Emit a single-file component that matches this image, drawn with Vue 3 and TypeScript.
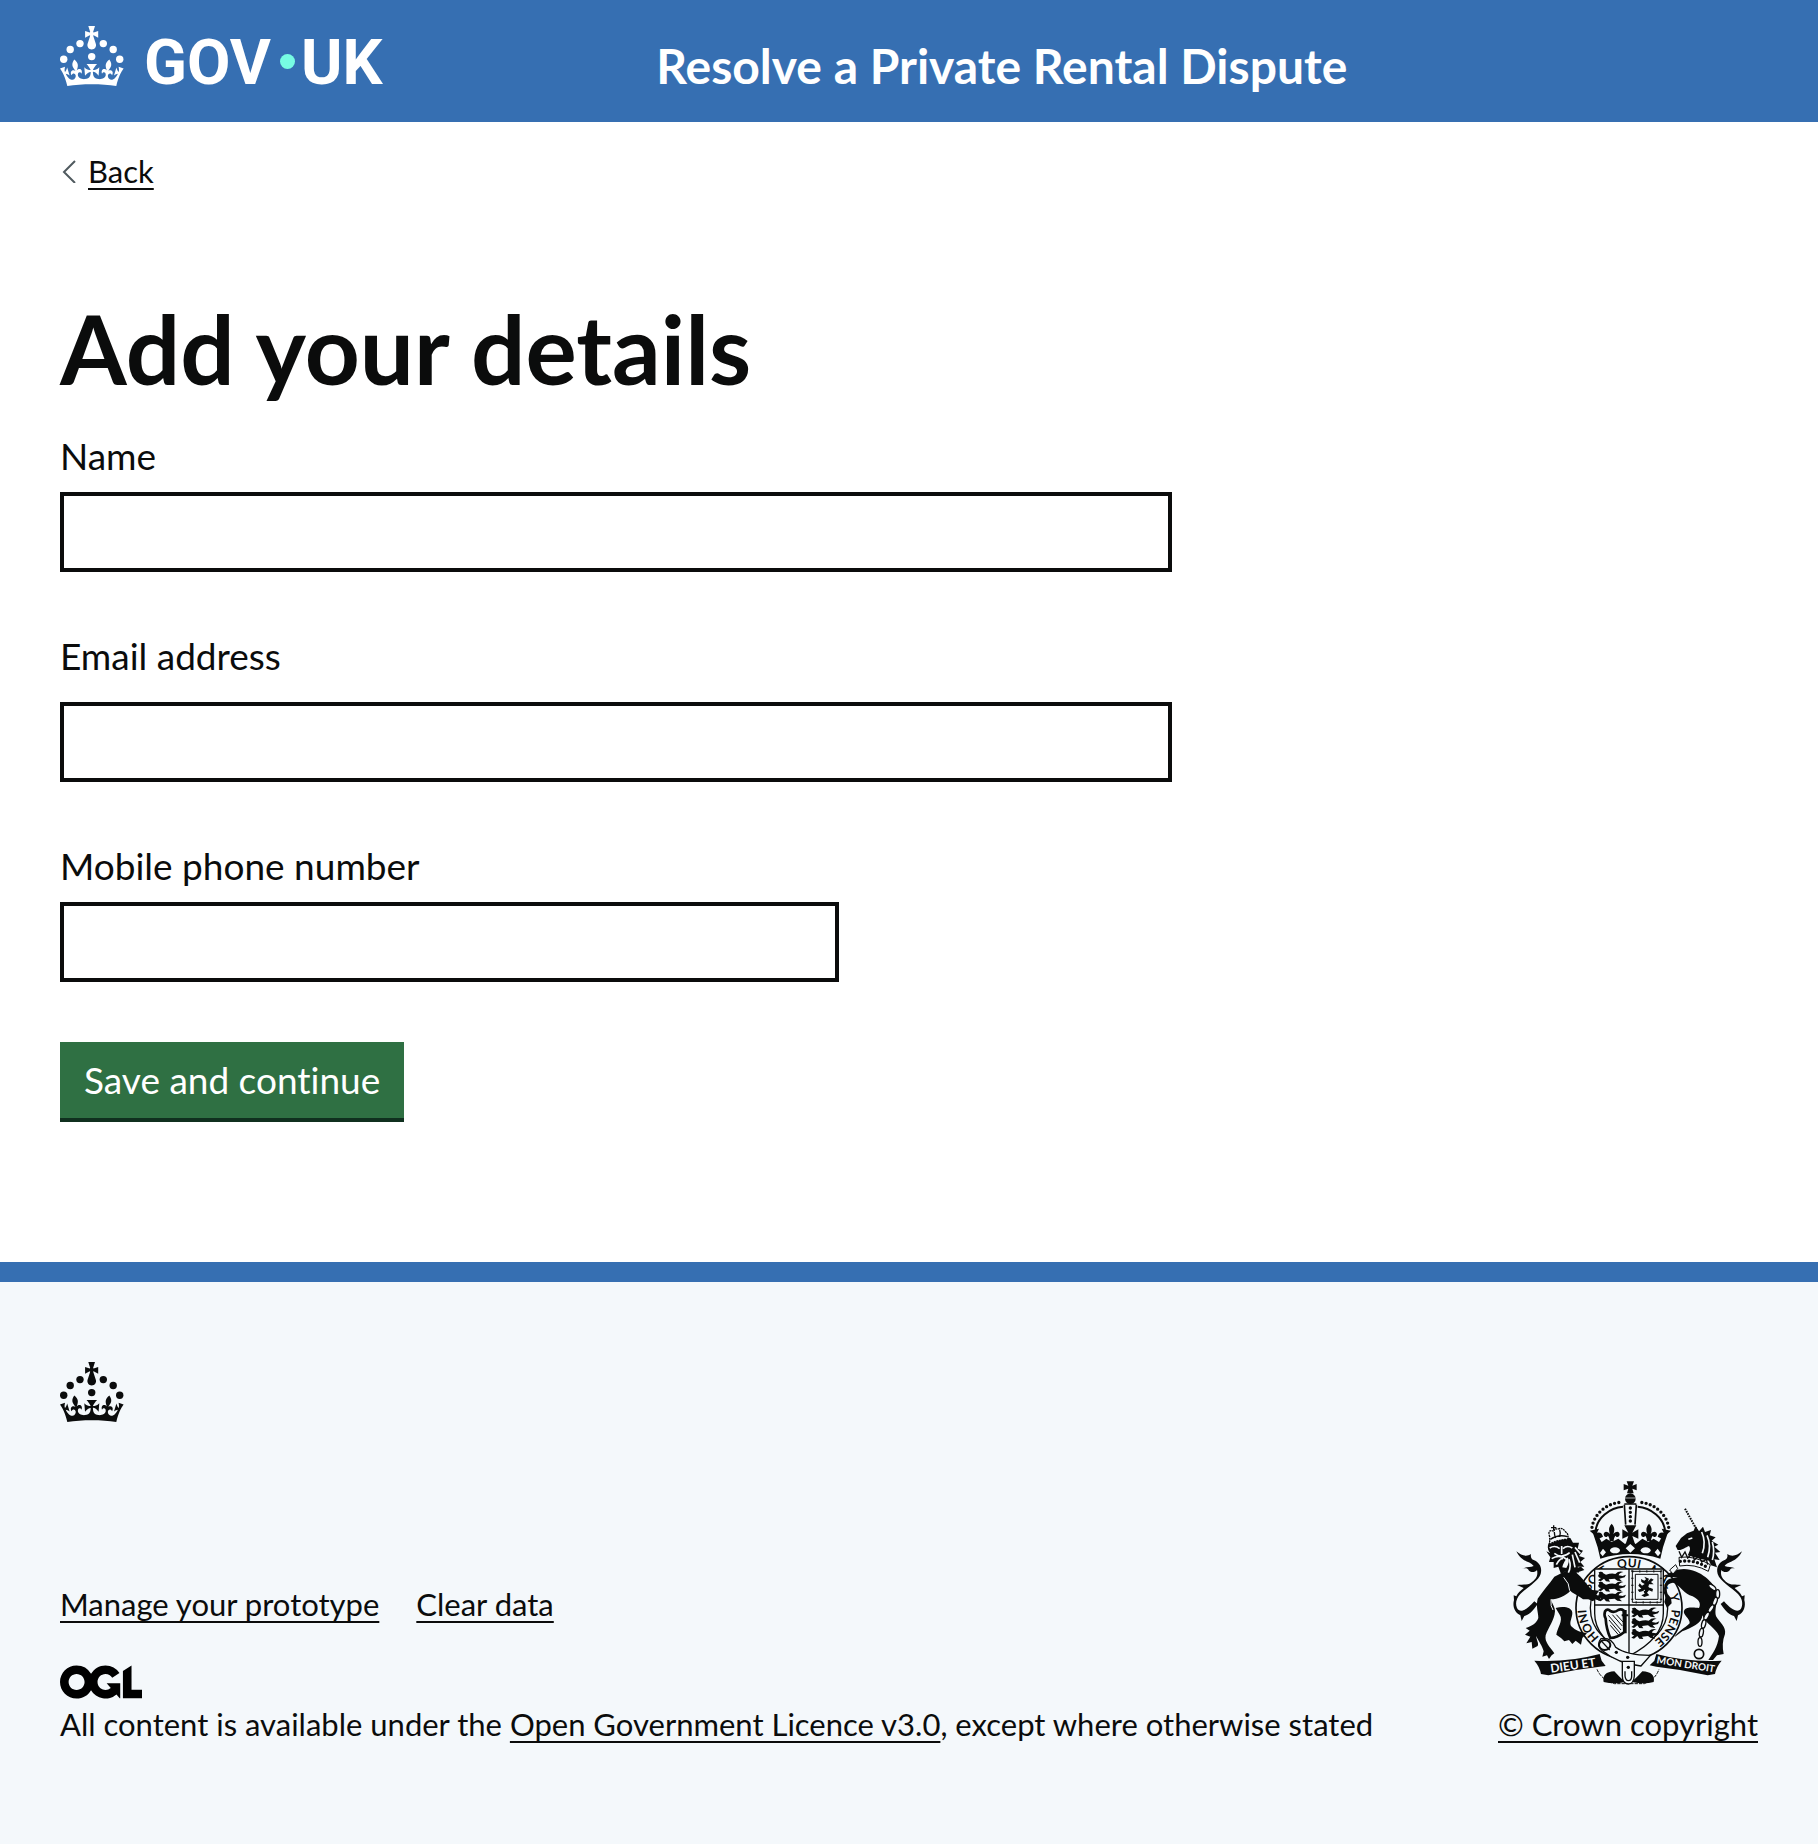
<script setup lang="ts">
import { ref } from 'vue'

interface Field {
  id: string
  label: string
  type: string
  autocomplete: string
  modifier?: string
}

const fields: Field[] = [
  { id: 'name', label: 'Name', type: 'text', autocomplete: 'name' },
  { id: 'email', label: 'Email address', type: 'email', autocomplete: 'email', modifier: 'field--spaced' },
  { id: 'phone', label: 'Mobile phone number', type: 'tel', autocomplete: 'tel', modifier: 'field--short' }
]

const values = ref<Record<string, string>>({ name: '', email: '', phone: '' })

const crownDots: [number, number][] = [
  [20, 17.6], [10.2, 23.5], [3.7, 33.2], [31.7, 30.6], [43.3, 17.6], [53.2, 23.5], [59.7, 33.2]
]
const crownPath =
  'M33.1 9.8c.2-.1.3-.3.5-.5l4.6 2.4v-6.8l-4.6 1.5c-.1-.2-.3-.3-.5-.5l1.9-5.9h-6.7l1.9 5.9c-.2.1-.3.3-.5.5l-4.6-1.5v6.8l4.6-2.4c.1.2.3.3.5.5l-2.6 8c-.9 2.8 1.2 5.7 4.1 5.7h0c3 0 5.1-2.9 4.1-5.7l-2.6-8ZM37 37.9s-3.4 3.8-4.1 6.1c2.2 0 4.2-.5 6.4-2.8l-.7 8.5c-2-2.8-4.4-4.1-5.7-3.8.1 3.1.5 6.7 5.8 7.2 3.7.3 6.7-1.5 7-3.8.4-2.6-2-4.3-3.7-1.6-1.4-4.5 2.4-6.1 4.9-3.2-1.9-4.5-1.8-7.7 2.4-10.9 3 4 2.6 7.3-1.2 11.1 2.4-1.3 6.2 0 4 4.6-1.2-2.8-3.7-2.2-4.2.2-.3 1.7.7 3.7 3 4.2 1.9.3 4.7-.9 7-5.9-1.3 0-2.4.7-3.9 1.7l2.4-8c.6 2.3 1.4 3.7 2.2 4.5.6-1.6.5-2.8 0-5.3l5 1.8c-2.6 3.6-5.2 8.7-7.3 17.5-7.4-1.1-15.7-1.7-24.5-1.7h0c-8.8 0-17.1.6-24.5 1.7-2.1-8.9-4.7-13.9-7.3-17.5l5-1.8c-.5 2.5-.6 3.7 0 5.3.8-.8 1.6-2.3 2.2-4.5l2.4 8c-1.5-1-2.6-1.7-3.9-1.7 2.3 5 5.2 6.2 7 5.9 2.3-.4 3.3-2.4 3-4.2-.5-2.4-3-3.1-4.2-.2-2.2-4.6 1.6-6 4-4.6-3.7-3.7-4.2-7.1-1.2-11.1 4.2 3.2 4.3 6.4 2.4 10.9 2.5-2.8 6.3-1.3 4.9 3.2-1.8-2.7-4.1-1-3.7 1.6.3 2.3 3.3 4.1 7 3.8 5.4-.5 5.7-4.2 5.8-7.2-1.3-.2-3.7 1-5.7 3.8l-.7-8.5c2.2 2.3 4.2 2.7 6.4 2.8-.7-2.3-4.1-6.1-4.1-6.1h10.6Z'

const lionRows: [number, number][] = [
  [292, 306], [292, 336], [292, 366], [392, 414], [392, 446], [392, 478]
]

const motto: [string, number][] = [
  ['HONI', 6], ['SOIT', 156], ['QUI', 268], ['MAL', 362], ['Y', 458], ['PENSE', 502]
]
</script>

<template>
  <div class="page">
    <header class="header">
      <a class="logo" href="#" aria-label="GOV.UK">
        <svg class="crown" viewBox="0 0 64 60" aria-hidden="true">
          <circle v-for="([x, y], i) in crownDots" :key="i" :cx="x" :cy="y" r="3.7" />
          <path :d="crownPath" />
        </svg>
        <span class="wordmark">GOV<i class="wordmark-dot"></i>UK</span>
      </a>
      <span class="service">Resolve a Private Rental Dispute</span>
    </header>

    <main class="main">
      <a class="back" href="#">
        <svg class="chevron" viewBox="0 0 14 24" aria-hidden="true">
          <path d="M13 2 L2 13 L13 24" fill="none" stroke="#505a5f" stroke-width="2" />
        </svg>
        <span class="underlined">Back</span>
      </a>

      <h1>Add your details</h1>

      <form @submit.prevent>
        <div v-for="f in fields" :key="f.id" class="field" :class="f.modifier">
          <label :for="f.id">{{ f.label }}</label>
          <input :id="f.id" v-model="values[f.id]" :name="f.id" :type="f.type" :autocomplete="f.autocomplete" />
        </div>
        <button type="submit">Save and continue</button>
      </form>
    </main>

    <footer class="footer">
      <svg class="crown" viewBox="0 0 64 60" aria-hidden="true">
        <circle v-for="([x, y], i) in crownDots" :key="i" :cx="x" :cy="y" r="3.7" />
        <path :d="crownPath" />
      </svg>
      <div class="footer-row">
        <div class="footer-meta">
          <nav class="footer-links" aria-label="Support links">
            <a class="underlined" href="#">Manage your prototype</a>
            <a class="underlined" href="#">Clear data</a>
          </nav>
          <svg class="ogl" viewBox="0 0 483.2 195.7" aria-hidden="true">
            <path d="M421.5 142.8V.1l-50.7 32.3v161.1h112.4v-50.7zm-122.3-9.6A47.12 47.12 0 0 1 221 97.8c0-26 21.1-47.1 47.1-47.1 16.7 0 31.4 8.7 39.7 21.8l42.7-27.2A97.63 97.63 0 0 0 268.1 0c-36.5 0-68.3 20.1-85.1 49.7A98 98 0 0 0 97.8 0C43.9 0 0 43.9 0 97.8s43.9 97.8 97.8 97.8c36.5 0 68.3-20.1 85.1-49.7a97.76 97.76 0 0 0 149.6 25.4l19.4 22.2h3v-87.8h-80l24.3 27.5zM97.8 145c-26 0-47.1-21.1-47.1-47.1s21.1-47.1 47.1-47.1 47.1 21.1 47.1 47.1S123.8 145 97.8 145" />
          </svg>
          <p class="licence">All content is available under the <a class="underlined" href="#">Open Government Licence v3.0</a>, except where otherwise stated</p>
        </div>

        <a class="copyright" href="#">
          <svg class="crest" viewBox="6 33 750 612" aria-hidden="true">
            <defs>
              <path id="garter-arc" d="M300 506 A128 122 0 1 1 400 535" />
              <g id="passant">
                <path d="M0 2 q10 -6 15 2 l8 4 q18 -6 28 -2 q10 -10 24 -6 q-12 2 -14 10 l12 2 l10 -4 l-4 8 l-16 4 l8 8 l-14 -2 l-8 -6 l-18 2 l4 7 l-12 -1 l-6 -8 l-10 8 l-8 -3 l9 -7 q-10 -2 -8 -10 q2 -2 10 -2 z" />
                <circle cx="8" cy="5" r="6" />
              </g>
              <g id="fleur">
                <path d="M0 -23 C10 -12 9 -2 5 8 C14 -2 23 0 24 9 C24 17 15 20 11 13 C8 18 6 22 6 30 H-6 C-6 22 -8 18 -11 13 C-15 20 -24 17 -24 9 C-23 0 -14 -2 -5 8 C-9 -2 -10 -12 0 -23Z" />
              </g>
              <path id="tail" d="M46 244 C60 256 76 262 90 252 C88 262 92 268 98 270 C116 278 124 292 119 312 C112 334 78 352 58 372 C46 385 42 400 48 414 C56 430 76 422 100 394 L110 402 C96 424 82 436 70 438 L62 453 L58 436 C40 428 34 408 39 390 L38 376 L46 379 C52 366 60 362 68 354 L48 345 C66 342 80 346 90 338 C104 328 112 318 108 300 C102 308 90 308 84 302 C80 294 74 294 64 296 C78 290 88 292 98 288 C86 272 62 278 46 244Z" />
            </defs>

            <!-- imperial crown -->
            <path d="M367 33 m10 1 h22 l-5 13 13 -5 v19 l-13 -5 4 14 h-20 l4 -14 -14 5 v-19 l14 5z" />
            <circle cx="388" cy="86" r="16" />
            <path d="M372 84 h32" class="cut" stroke-width="2" />
            <path d="M273 172 C280 130 318 100 358 97" class="beads" />
            <path d="M503 172 C496 130 458 100 418 97" class="beads" />
            <path d="M284 184 C286 146 326 112 366 110 M492 184 C490 146 450 112 410 110" class="line" stroke-width="6" />
            <path d="M370 104 L374 164 M406 104 L402 164 M370 102 H406" class="line" stroke-width="5" />
            <path d="M388 114 V160" class="beads" />
            <path d="M274 184 L290 232 Q294 250 298 266 Q342 252 388 252 Q434 252 478 266 Q482 250 486 232 L502 184 L486 196 L474 216 L458 206 L442 216 L424 206 L404 222 L388 214 L372 222 L352 206 L332 216 L316 206 L302 216 L290 196Z" />
            <path d="M266 182 L294 176 L288 188 Q302 184 306 200 L294 206 L284 198Z M510 182 L482 176 L488 188 Q474 184 470 200 L482 206 L492 198Z" />
            <use href="#fleur" x="332" y="184" />
            <use href="#fleur" x="444" y="184" />
            <path d="M370 166 h36 l-12 22 18 -10 v28 l-18 -8 8 24 h-28 l8 -24 -18 8 v-28 l18 10z" />
            <g class="paper">
              <ellipse cx="342" cy="241" rx="15" ry="9" />
              <ellipse cx="434" cy="241" rx="15" ry="9" />
              <path d="M388 222 l14 13 -14 13 -14 -13z M306 236 l9 11 -10 12 -8 -10z M470 236 l-9 11 10 12 8 -10z" />
            </g>

            <!-- tails -->
            <use href="#tail" />
            <use href="#tail" transform="matrix(-1 0 0 1 769 0)" />

            <!-- garter -->
            <ellipse cx="384" cy="414" rx="159" ry="154" class="plate" stroke-width="5" />
            <ellipse cx="384" cy="414" rx="116" ry="116" class="line" stroke-width="4" />
            <g class="motto">
              <text v-for="[word, offset] in motto" :key="word">
                <textPath href="#garter-arc" :startOffset="offset">{{ word }}</textPath>
              </text>
            </g>

            <!-- shield -->
            <path d="M281 297 H487 V430 C487 490 440 530 384 558 C328 530 281 490 281 430Z" class="plate" stroke-width="4" />
            <path d="M384 297 V558 M281 405 H487" class="line" stroke-width="4" />
            <use v-for="([x, y], i) in lionRows" :key="i" href="#passant" :x="x" :y="y" />
            <path d="M394 304 H480 V397 H394Z M403 313 H471 V388 H403Z" class="line" stroke-width="3" />
            <path d="M394 304 H480 V397 H394Z" class="line" stroke-width="7" stroke-dasharray="3 18" />
            <path d="M430 320 l14 6 -4 9 10 -10 8 4 -8 7 8 7 -14 0 -2 8 14 6 -2 8 -10 -4 -6 7 7 8 -15 5 -9 -5 10 -5 -4 -8 -12 3 -5 -7 11 -3 -9 -9 4 -7 7 7 8 -5 -10 -6 -1 -9 10 5 5 -4z" />
            <path d="M418 336 l8 6 M444 352 l8 -6 M424 366 l8 -6" class="cut" stroke-width="3" />
            <path d="M312 424 q8 -10 16 -1 q12 6 24 -3 q8 -4 16 2 l2 64 q-22 18 -42 18 q-12 -26 -14 -58 q-6 -10 -2 -22z" class="line" stroke-width="8" />
            <path d="M322 436 L360 480 M324 450 L358 490 M328 466 L352 494 M334 434 L364 468 M346 434 L366 456" class="line" stroke-width="3" />
            <path d="M362 436 h20 M374 420 v70" class="line" stroke-width="6" />

            <!-- buckled strap -->
            <path d="M300 506 Q330 500 344 532 Q376 556 448 556 L420 588 Q350 580 304 542 Q284 524 300 506Z" class="plate" stroke-width="4" />
            <ellipse cx="311" cy="525" rx="17" ry="15" class="line" stroke-width="6" />
            <path d="M302 514 L326 540" class="line" stroke-width="4" />
            <circle cx="346" cy="547" r="5" /><circle cx="380" cy="562" r="5" />
            <path d="M288 598 Q302 630 340 641 H430 Q462 630 474 598" class="line" stroke-width="3" stroke-dasharray="10 3" />
            <path d="M308 636 Q302 606 340 604 Q352 618 372 636 Q340 644 308 636Z M458 636 Q464 606 424 604 Q412 618 392 636 Q430 644 458 636Z" />
            <path d="M364 574 H400 V618 Q398 642 382 642 Q364 642 364 618Z" class="plate" stroke-width="4" />
            <path d="M372 604 V618 Q374 632 382 632 Q392 632 392 618 V604" class="line" stroke-width="4" />
            <circle cx="382" cy="592" r="5" />

            <!-- lion -->
            <path d="M160 320 C146 340 126 362 110 386 C104 410 112 426 112 444 C106 460 94 468 74 474 L86 482 L72 494 L88 500 L76 520 L92 516 L94 536 L110 528 C114 518 106 512 106 498 C112 514 124 526 128 544 L124 560 L138 556 L144 567 L152 556 L160 550 C146 530 130 516 134 496 C142 472 160 452 162 424 C162 410 152 400 150 388 C170 388 194 378 208 362 C220 374 236 378 246 388 L262 388 L276 394 L282 388 L296 392 L298 380 L286 374 L294 362 L274 360 C258 346 244 322 226 308 L250 300 L240 290 L200 300Z" />
            <path d="M164 414 C188 408 212 412 214 428 C214 444 204 456 210 468 C224 482 238 486 258 490 L244 504 L240 524 L224 512 L214 522 L204 510 L190 514 L180 504 L166 494 C168 474 188 452 176 434Z" />
            <path d="M158 206 C138 214 136 236 148 250 L136 244 L148 262 L144 276 L158 276 L158 294 L172 290 L180 312 L194 304 L206 322 L216 302 L234 308 L230 290 L250 290 L238 276 L252 264 L234 258 L246 242 L230 236 L234 218 L216 218 L208 204 Q184 198 158 206Z" />
            <path d="M146 234 Q162 224 176 236 M186 236 Q198 224 214 234 M182 228 V252 M160 250 Q182 268 206 248 M152 266 Q176 250 200 270 M166 284 Q176 264 186 266 M204 268 Q212 290 202 308 M214 254 L222 292 M222 246 L236 278 M222 232 L238 250" class="cut" stroke-width="5" />
            <path d="M196 294 Q208 274 200 262 Q186 278 184 292Z" class="paper" />
            <path d="M146 200 Q138 176 160 184 Q158 174 170 178 Q184 170 194 186 Q204 192 200 208 Q174 208 146 222Z" class="plate" stroke-width="4" stroke-dasharray="6 2" />
            <path d="M148 208 Q172 192 200 200 M160 186 Q160 196 164 204 M158 166 v14 M150 173 h16 M176 180 Q180 190 176 200" class="line" stroke-width="4" />
            <path d="M188 322 Q206 340 206 362 M150 388 Q148 410 156 420" class="cut" stroke-width="3" />

            <!-- unicorn -->
            <path d="M552 116 L590 184" class="line" stroke-width="6" stroke-dasharray="5 3" />
            <path d="M524 228 L540 204 L558 190 L578 182 L584 168 L594 184 L606 170 L612 186 L630 180 L626 196 L644 202 L632 212 L652 224 L640 230 L658 246 L642 248 L656 270 L640 268 L648 292 L630 286 L624 272 L596 266 L560 256 C566 244 570 236 564 228 C552 232 544 242 530 240Z" />
            <path d="M562 208 l12 -4 M602 186 Q616 216 604 250 M618 196 Q632 226 620 262 M634 216 Q642 244 634 270" class="cut" stroke-width="5" />
            <path d="M534 262 Q580 256 628 284 L622 304 Q580 280 536 288Z" class="plate" stroke-width="3" />
            <path d="M538 274 Q582 268 622 294" class="beads" />
            <path d="M534 244 L542 262 L552 246 L560 264 L574 250 L580 270 L594 258 L602 276 L616 268 L620 284" class="line" stroke-width="4" />
            <path d="M518 304 C550 288 590 302 614 322 C630 336 648 352 648 384 C646 410 640 426 646 440 C656 456 676 470 672 492 C664 512 664 532 668 552 L648 556 L636 570 L622 570 C634 552 650 532 654 498 C644 474 612 460 604 436 C604 460 570 474 544 484 L520 502 C528 486 552 474 566 460 C568 444 542 434 550 420 C556 410 580 412 594 414 C602 400 592 384 566 376 C544 364 532 342 516 338 C498 340 494 352 500 372 L510 384 L512 400 L498 414 L490 396 L494 380 C484 356 490 332 506 326 L530 322 C512 322 500 318 494 326 C496 312 506 308 518 304Z" />
            <path d="M506 300 L524 284 L530 296 L516 312Z" class="plate" stroke-width="3" />
            <g class="plate" stroke-width="4">
              <ellipse cx="634" cy="352" rx="6" ry="13" transform="rotate(-50 634 352)" />
              <ellipse cx="650" cy="372" rx="6" ry="13" />
              <ellipse cx="642" cy="394" rx="6" ry="13" transform="rotate(20 642 394)" />
              <ellipse cx="630" cy="416" rx="6" ry="13" transform="rotate(32 630 416)" />
              <ellipse cx="617" cy="438" rx="6" ry="13" transform="rotate(28 617 438)" />
              <ellipse cx="608" cy="462" rx="6" ry="13" transform="rotate(14 608 462)" />
              <ellipse cx="601" cy="488" rx="6" ry="13" transform="rotate(10 601 488)" />
              <ellipse cx="597" cy="516" rx="6" ry="13" />
            </g>
            <circle cx="594" cy="552" r="14" class="line" stroke-width="5" />

            <!-- ribbons -->
            <path d="M100 572 Q200 578 296 552 L302 572 L314 588 L296 590 Q220 598 142 616 L120 612 Q116 590 100 572Z" />
            <path d="M662 572 Q562 578 466 552 L460 572 L446 586 L466 590 Q542 598 620 616 L642 612 Q646 590 662 572Z" />
            <g class="ribbon-text">
              <text transform="translate(150 608) rotate(-8)">DIEU ET</text>
              <text transform="translate(466 580) rotate(9)" class="ribbon-small">MON DROIT</text>
            </g>
          </svg>
          <span class="underlined">© Crown copyright</span>
        </a>
      </div>
    </footer>
  </div>
</template>

<style>
body {
  margin: 0;
  background: #f4f8fb;
}
</style>

<style scoped>
.page {
  color: #0b0c0c;
  background: #fff;
  font-family: Lato, "Liberation Sans", sans-serif;
  font-size: 31px;
  line-height: 40px;
  font-variant-ligatures: none;
}

a {
  color: inherit;
  text-decoration: none;
}

.underlined {
  text-decoration: underline;
  text-decoration-thickness: 2px;
  text-decoration-skip-ink: none;
  text-underline-offset: 5px;
}

.crown {
  display: block;
  flex: none;
  width: 64px;
  height: 60px;
  fill: currentColor;
}

.header {
  display: flex;
  align-items: flex-start;
  padding: 26px 60px;
  color: #fff;
  background: #366fb2;
}

.logo {
  display: flex;
  flex: none;
  width: 35%;
}

.wordmark {
  display: flex;
  padding-top: 7px;
  margin-left: 20px;
  font: 700 63px/60px Roboto, "Liberation Sans", sans-serif;
}

.wordmark-dot {
  width: 15px;
  height: 15px;
  margin: 21px 6px 0 9px;
  border-radius: 50%;
  background: #77fce3;
}

.service {
  padding: 10px 0 0 2px;
  font-size: 48px;
  font-weight: 700;
  line-height: 60px;
}

.main {
  padding: 29px 60px 140px;
}

.back {
  display: flex;
  align-items: center;
  gap: 12px;
  width: fit-content;
}

.chevron {
  width: 14px;
  height: 24px;
  margin-left: 2px;
}

h1 {
  margin: 105px 0 32px;
  font-size: 96px;
  font-weight: 700;
  line-height: 104px;
}

.field {
  display: flex;
  flex-direction: column;
  gap: 12px;
  width: calc((100% + 60px) * 2 / 3 - 60px);
  margin-bottom: 60px;
}

.field--spaced {
  gap: 22px;
}

label {
  font-size: 37px;
  line-height: 48px;
}

input {
  box-sizing: border-box;
  width: 100%;
  height: 80px;
  padding: 8px;
  border: 4px solid #0b0c0c;
  border-radius: 0;
  background: #fff;
  font: inherit;
  font-size: 37px;
}

.field--short input {
  max-width: 779px;
}

button {
  display: block;
  padding: 0 24px;
  border: 0;
  border-bottom: 4px solid #10301f;
  color: #fff;
  background: #2f7043;
  font: inherit;
  font-size: 37px;
  line-height: 76px;
  font-variant-ligatures: none;
}

.footer {
  padding: 80px 60px 100px;
  border-top: 20px solid #366fb2;
  background: #f4f8fb;
}

.footer-row {
  display: flex;
  align-items: flex-end;
  justify-content: space-between;
  gap: 60px;
  margin-top: 59px;
}

.footer-links {
  display: flex;
  gap: 37px;
}

.ogl {
  display: block;
  width: 82px;
  height: 34px;
  margin: 41px 0 5px;
}

.licence {
  margin: 0;
}

.copyright {
  display: flex;
  flex: none;
  flex-direction: column;
  align-items: center;
  gap: 19px;
}

.crest {
  display: block;
  width: 250px;
  height: 204px;
  fill: #0b0c0c;
}

.line {
  fill: none;
  stroke: #0b0c0c;
}

.cut {
  fill: none;
  stroke: #f4f8fb;
}

.beads {
  fill: none;
  stroke: #0b0c0c;
  stroke-width: 10px;
  stroke-linecap: round;
  stroke-dasharray: 0 13;
}

.plate {
  fill: #f4f8fb;
  stroke: #0b0c0c;
}

.paper {
  fill: #f4f8fb;
}

.motto {
  font-size: 36px;
  font-weight: 700;
}

.ribbon-text {
  fill: #f4f8fb;
  font-size: 36px;
  font-weight: 700;
}

.ribbon-small {
  font-size: 30px;
}
</style>
